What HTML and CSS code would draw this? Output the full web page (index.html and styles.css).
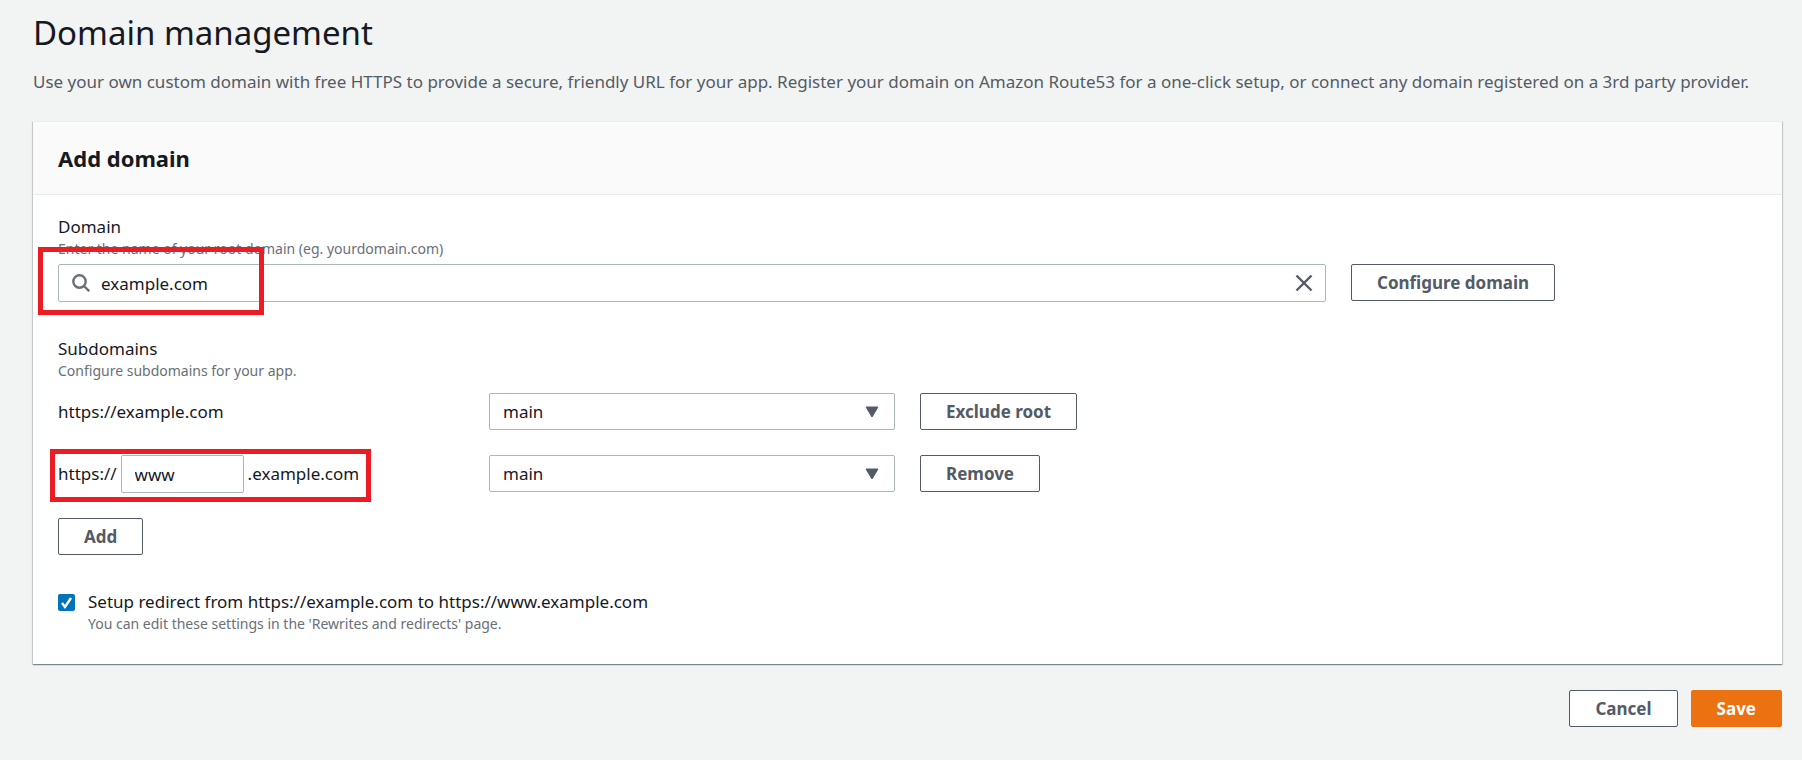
FILE: index.html
```
<!DOCTYPE html>
<html lang="en">
<head>
    <meta charset="UTF-8">
    <title>Domain management</title>
    <link rel="stylesheet" href="styles.css">
</head>
<body>
    <main>
        <h1>Domain management</h1>
        <p class="description">Use your own custom domain with free HTTPS to provide a secure, friendly URL for your app. Register your domain on Amazon Route53 for a one-click setup, or connect any domain registered on a 3rd party provider.</p>

        <form>
            <section class="card">
                <div class="card-header">
                    <h2>Add domain</h2>
                </div>
                <div class="card-body">
                    <div class="field">
                        <label for="domain">Domain</label>
                        <p class="hint">Enter the name of your root domain (eg. yourdomain.com)</p>
                        <div class="row domain-row">
                            <div class="search">
                                <svg class="search-icon" viewBox="0 0 18 18" width="18" height="18">
                                    <circle cx="7.5" cy="7.5" r="6.2"></circle>
                                    <path d="M12 12l5.2 5.2"></path>
                                </svg>
                                <input type="text" id="domain" value="example.com">
                                <button type="button" class="clear" aria-label="Clear">
                                    <svg viewBox="0 0 18 18" width="18" height="18">
                                        <path d="M1.5 1.5l15 15M16.5 1.5l-15 15"></path>
                                    </svg>
                                </button>
                                <div class="highlight highlight-domain"></div>
                            </div>
                            <button type="button" class="btn">Configure domain</button>
                        </div>
                    </div>

                    <div class="field">
                        <h3>Subdomains</h3>
                        <p class="hint">Configure subdomains for your app.</p>
                        <div class="subdomains">
                            <div class="row">
                                <div class="url">https://example.com</div>
                                <select aria-label="Branch for example.com">
                                    <option>main</option>
                                </select>
                                <button type="button" class="btn">Exclude root</button>
                            </div>
                            <div class="row">
                                <div class="url">
                                    <span>https://</span>
                                    <input type="text" class="prefix" value="www" aria-label="Subdomain">
                                    <span>.example.com</span>
                                    <div class="highlight highlight-subdomain"></div>
                                </div>
                                <select aria-label="Branch for www.example.com">
                                    <option>main</option>
                                </select>
                                <button type="button" class="btn">Remove</button>
                            </div>
                            <button type="button" class="btn">Add</button>
                        </div>
                    </div>

                    <div class="redirect">
                        <input type="checkbox" id="redirect" checked>
                        <div>
                            <label for="redirect">Setup redirect from https://example.com to https://www.example.com</label>
                            <p class="hint">You can edit these settings in the 'Rewrites and redirects' page.</p>
                        </div>
                    </div>
                </div>
            </section>

            <div class="actions">
                <button type="button" class="btn">Cancel</button>
                <button type="submit" class="btn primary">Save</button>
            </div>
        </form>
    </main>
</body>
</html>
```
FILE: styles.css
```
* {
    box-sizing: border-box;
}
body {
    margin: 0;
    background-color: #f2f3f3;
    color: #16191f;
    font-family: "Noto Sans", sans-serif;
    font-size: 17px;
    line-height: 24px;
}
main {
    padding: 11px 20px 33px 33px;
}
h1, h2, h3, p {
    margin: 0;
}
h1 {
    font-size: 33px;
    font-weight: 400;
    line-height: 44px;
}
.description {
    margin-top: 15px;
    color: #545b64;
}
.card {
    margin-top: 27px;
    background-color: white;
    border-top: 1px solid #eaeded;
    box-shadow: 0 1px 1px 0 rgba(0, 28, 36, 0.3), 1px 1px 1px 0 rgba(0, 28, 36, 0.15), -1px 1px 1px 0 rgba(0, 28, 36, 0.15);
}
.card-header {
    padding: 20px 25px;
    background-color: #fafafa;
    border-bottom: 1px solid #eaeded;
}
h2 {
    font-size: 22px;
    font-weight: 700;
    line-height: 32px;
}
h3 {
    font-size: 17px;
    font-weight: 400;
}
.card-body {
    padding: 20px 25px 30px;
}
.field {
    margin-bottom: 35px;
}
label {
    display: block;
}
.hint {
    color: #687078;
    font-size: 14px;
    line-height: 20px;
}
.row {
    display: grid;
    grid-template-columns: repeat(4, 1fr);
    gap: 25px;
    justify-items: start;
    align-items: start;
}
.domain-row {
    margin-top: 5px;
}
.search {
    position: relative;
    grid-column: span 3;
    width: 100%;
}
input[type="text"], select {
    width: 100%;
    height: 38px;
    padding: 0 13px;
    background-color: white;
    border: 1px solid #aab7b8;
    border-radius: 2px;
    color: #16191f;
    font: inherit;
}
.search input[type="text"] {
    display: block;
    padding: 0 48px 0 42px;
}
svg {
    display: block;
    fill: none;
    stroke: #545b64;
    stroke-width: 2.4;
}
.search-icon {
    position: absolute;
    top: 10px;
    left: 14px;
    stroke: #687078;
}
.clear {
    position: absolute;
    top: 10px;
    right: 13px;
    padding: 0;
    background: none;
    border: none;
    cursor: pointer;
}
select {
    height: 37px;
    appearance: none;
    background-image: url("data:image/svg+xml,%3Csvg xmlns='http://www.w3.org/2000/svg' width='14' height='12'%3E%3Cpath d='M1 1h12L7 11z' fill='%23545b64' stroke='%23545b64' stroke-linejoin='round'/%3E%3C/svg%3E");
    background-position: right 15px center;
    background-repeat: no-repeat;
}
.btn {
    height: 37px;
    padding: 0 25px;
    background-color: white;
    border: 1px solid #545b64;
    border-radius: 2px;
    color: #545b64;
    font: inherit;
    font-weight: 700;
    cursor: pointer;
}
.subdomains {
    display: grid;
    gap: 25px;
    justify-items: start;
    margin-top: 12px;
}
.subdomains .row {
    width: 100%;
}
.url {
    position: relative;
    display: flex;
    align-items: center;
    gap: 4px;
    min-height: 37px;
}
.url .prefix {
    width: 123px;
}
.redirect {
    display: flex;
    gap: 13px;
}
.redirect input {
    appearance: none;
    width: 17px;
    height: 17px;
    margin: 4px 0 0;
    background: #0073bb url("data:image/svg+xml,%3Csvg xmlns='http://www.w3.org/2000/svg' width='17' height='17'%3E%3Cpath d='M4 9l3 4 6-9' fill='none' stroke='white' stroke-width='2.4'/%3E%3C/svg%3E") center no-repeat;
    border-radius: 2px;
}
.actions {
    display: flex;
    justify-content: flex-end;
    gap: 13px;
    margin-top: 26px;
}
.primary {
    background-color: #ec7211;
    border-color: #ec7211;
    color: white;
}
/* red callouts over the values to fill in */
.highlight {
    position: absolute;
    border: 5px solid #ed1c24;
    pointer-events: none;
}
.highlight-domain {
    top: -17px;
    left: -20px;
    width: 226px;
    height: 68px;
}
.highlight-subdomain {
    top: -6px;
    left: -8px;
    width: 321px;
    height: 53px;
}
```
